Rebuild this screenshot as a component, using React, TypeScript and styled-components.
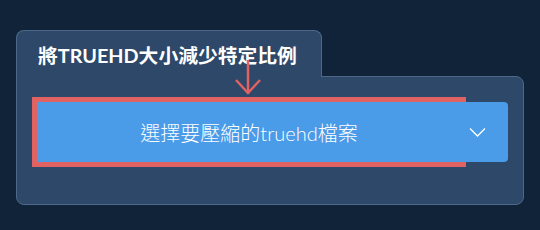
import React from 'react';
import styled, { createGlobalStyle } from 'styled-components';

const GlobalStyle = createGlobalStyle`
  html, body {
    margin: 0;
    padding: 0;
    background: #112339;
  }
  body {
    font-family: "Lato", "Noto Sans CJK TC", sans-serif;
  }
`;

const colors = {
  bg: '#112339',
  panel: '#2d4868',
  border: '#4d6889',
  blue: '#4a9be8',
  red: '#e06262',
  white: '#ffffff',
};

const Page = styled.div`
  width: 540px;
  height: 230px;
  padding: 30px 16px 0;
  box-sizing: border-box;
`;

const Card = styled.div`
  position: relative;
  width: 508px;
`;

const Tab = styled.div`
  position: relative;
  z-index: 1;
  width: 306px;
  height: 47px;
  margin-bottom: -1px;
  box-sizing: border-box;
  padding: 12px 0 0 21px;
  background: ${colors.panel};
  border: 1px solid ${colors.border};
  border-bottom: none;
  border-radius: 8px 8px 0 0;
  color: ${colors.white};
  font-weight: 700;
  font-size: 19.8px;
  line-height: 24px;
  white-space: nowrap;
`;

const Panel = styled.div`
  display: flex;
  align-items: stretch;
  height: 129px;
  box-sizing: border-box;
  padding: 25px 15px 0 20px;
  background: ${colors.panel};
  border: 1px solid ${colors.border};
  border-radius: 0 8px 8px 8px;
`;

const SelectButton = styled.button`
  flex: 1;
  height: 60px;
  border: none;
  border-radius: 0;
  outline: 5px solid ${colors.red};
  background: ${colors.blue};
  color: ${colors.white};
  font-family: inherit;
  font-size: 20px;
  font-weight: 300;
  padding: 0;
  cursor: pointer;
`;

const DropButton = styled.button`
  width: 47px;
  height: 60px;
  display: flex;
  align-items: center;
  justify-content: flex-start;
  padding: 0 0 0 8px;
  border: none;
  border-radius: 0 4px 4px 0;
  background: ${colors.blue};
  cursor: pointer;
`;

const Pointer = styled.svg`
  position: absolute;
  left: 218px;
  top: 28px;
  z-index: 2;
  pointer-events: none;
`;

const App: React.FC = () => (
  <>
    <GlobalStyle />
    <Page>
      <Card>
        <Tab>將TRUEHD大小減少特定比例</Tab>
        <Panel>
          <SelectButton>選擇要壓縮的truehd檔案</SelectButton>
          <DropButton aria-label="more">
            <svg width="17" height="10" viewBox="0 0 17 10">
              <polyline
                points="1,1.5 8.5,9 16,1.5"
                fill="none"
                stroke="#fff"
                strokeWidth="1.3"
              />
            </svg>
          </DropButton>
        </Panel>
        <Pointer width="28" height="40" viewBox="0 0 28 40">
          <line x1="14" y1="2" x2="14" y2="36" stroke={colors.red} strokeWidth="2.5" />
          <polyline
            points="2,22 14,35 26,22"
            fill="none"
            stroke={colors.red}
            strokeWidth="2.5"
          />
        </Pointer>
      </Card>
    </Page>
  </>
);

export default App;
